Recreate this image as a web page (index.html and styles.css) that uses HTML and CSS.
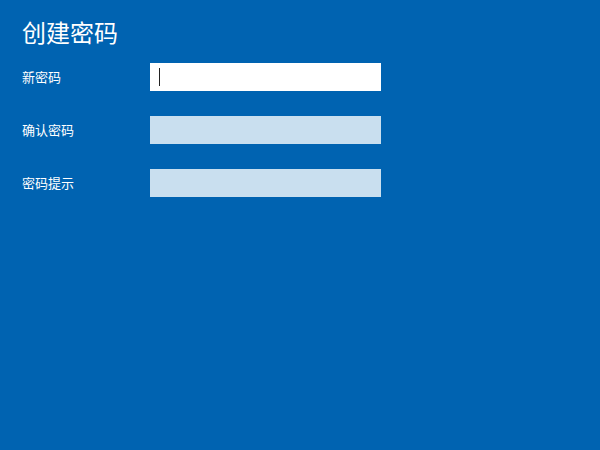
FILE: index.html
```html
<!DOCTYPE html>
<html lang="zh-CN">
<head>
<meta charset="utf-8">
<title>创建密码</title>
<link rel="stylesheet" href="styles.css">
</head>
<body>
<main class="page">
  <h1 class="title">创建密码</h1>
  <div class="form">
    <label class="label">新密码</label>
    <div class="field field-active"><span class="caret"></span></div>
    <label class="label">确认密码</label>
    <div class="field field-disabled"></div>
    <label class="label">密码提示</label>
    <div class="field field-disabled"></div>
  </div>
</main>
</body>
</html>
```
FILE: styles.css
```css
html, body {
  margin: 0;
  padding: 0;
  background: #0063b1;
  width: 600px;
  height: 450px;
  overflow: hidden;
}
.page {
  padding: 16px 0 0 22px;
  font-family: "Noto Sans CJK SC", "Noto Sans", sans-serif;
  color: #ffffff;
}
.title {
  margin: 0 0 15px 0;
  font-size: 24px;
  line-height: 32px;
  font-weight: 400;
}
.form {
  display: grid;
  grid-template-columns: 128px 231px;
  row-gap: 25px;
  align-items: center;
}
.label {
  font-size: 13px;
  line-height: 18px;
}
.field {
  height: 28px;
  box-sizing: border-box;
  display: flex;
  align-items: center;
  padding-left: 9px;
}
.field-active {
  background: #ffffff;
}
.field-disabled {
  background: #c9dfef;
}
.caret {
  width: 1px;
  height: 18px;
  background: #222222;
}
```
